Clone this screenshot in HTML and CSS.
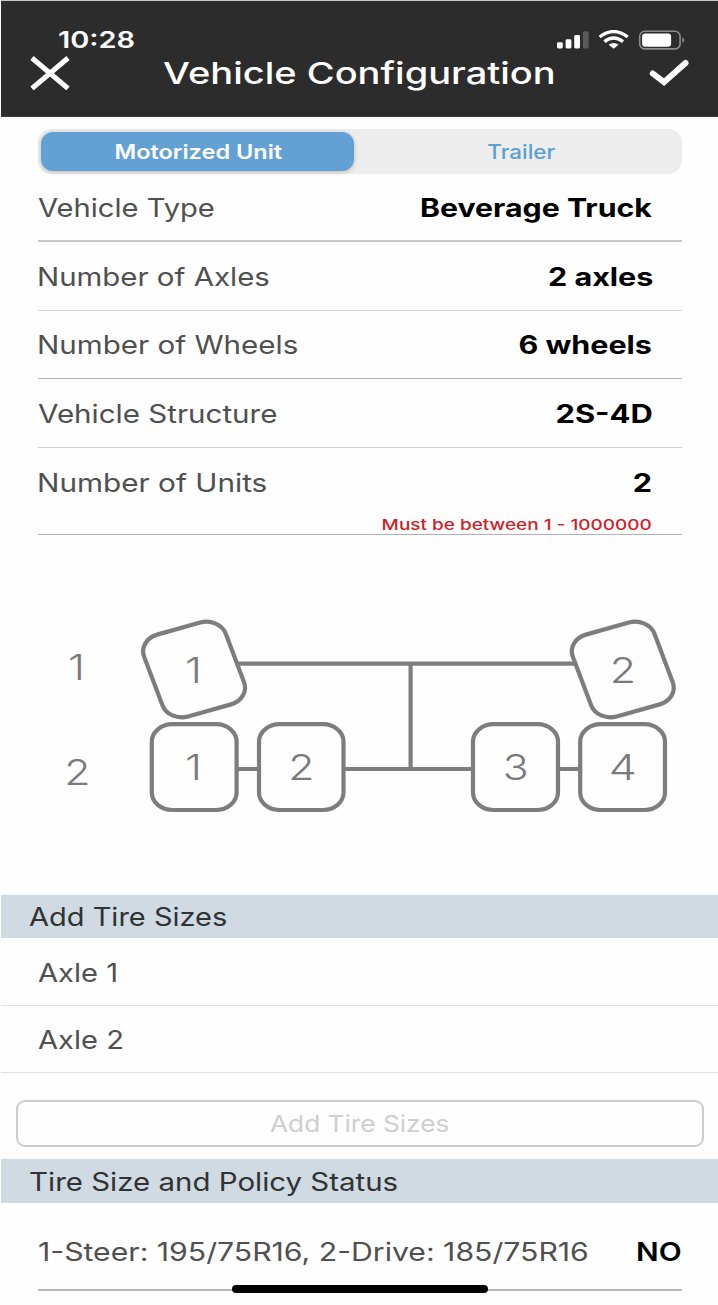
FILE: index.html
```html
<!DOCTYPE html>
<html lang="en">
<head>
<meta charset="utf-8">
<title>Vehicle Configuration</title>
<link rel="stylesheet" href="styles.css">
</head>
<body>
<div class="screen">
  <header class="header">
    <div class="status">
      <span class="time">10:28</span>
      <svg class="status-icons" width="129" height="20" viewBox="0 0 129 20">
        <g fill="#fff">
          <rect x="0" y="12.300" width="5.800" height="6.200" rx="1.400"/>
          <rect x="8.600" y="9.300" width="5.800" height="9.200" rx="1.400"/>
          <rect x="17.200" y="5" width="5.800" height="13.500" rx="1.400"/>
          <rect x="25.900" y="1.200" width="5.800" height="17.300" rx="1.400" fill="#5a5a5a"/>
        </g>
        <g fill="none" stroke="#fff" stroke-width="3.400">
          <path d="M42.700 7Q56.500 -3.800 70.700 7"/>
          <path d="M47.400 11.600Q56.600 4.200 66 11.600"/>
        </g>
        <path d="M51.600 14.800Q56.600 11 61.600 14.800L56.600 18.800Z" fill="#fff"/>
        <rect x="82.700" y="1.300" width="40.400" height="17.600" rx="5" fill="none" stroke="#8c8c8c" stroke-width="1.600"/>
        <rect x="85.100" y="3.500" width="29" height="13.200" rx="3" fill="#fff"/>
        <path d="M125.300 7.200Q129.500 10.100 125.300 13Z" fill="#8c8c8c"/>
      </svg>
    </div>
    <div class="nav">
      <svg class="close" width="40" height="34" viewBox="0 0 40 34"><path d="M2 2L38 32.500M38 2L2 32.500" stroke="#fff" stroke-width="5"/></svg>
      <span class="title">Vehicle Configuration</span>
      <svg class="check" width="42" height="30" viewBox="0 0 42 30"><path d="M4.800 15.500L16 24.200L37.500 5" fill="none" stroke="#fff" stroke-width="6" stroke-linecap="round"/></svg>
    </div>
  </header>

  <div class="tabs">
    <div class="tab active"><span class="motorized">Motorized Unit</span></div>
    <div class="tab"><span class="trailer">Trailer</span></div>
  </div>

  <div class="fields">
    <div class="field strong"><span class="label type">Vehicle Type</span><b class="value truck">Beverage Truck</b></div>
    <div class="field"><span class="label stem axles">Number of Axles</span><b class="value two-axles">2 axles</b></div>
    <div class="field mid"><span class="label stem wheels">Number of Wheels</span><b class="value six-wheels">6 wheels</b></div>
    <div class="field"><span class="label structure">Vehicle Structure</span><b class="value code">2S-4D</b></div>
    <div class="field mid last">
      <span class="label stem units">Number of Units</span>
      <div class="entry"><b class="value count">2</b><span class="error">Must be between 1 - 1000000</span></div>
    </div>
  </div>

  <svg class="diagram" width="718" height="360" viewBox="0 535 718 360">
    <g fill="none" stroke="#7d7d7d" stroke-width="4.200">
      <path d="M230 663.700H590M410.600 663.700V769M238 769H258M344 769H472M558 769H580"/>
      <g fill="#fefefe">
        <rect x="151.800" y="724.200" width="84.800" height="85.800" rx="20.500" ry="17.500"/>
        <rect x="259" y="724.200" width="84.500" height="85.800" rx="20.500" ry="17.500"/>
        <rect x="473" y="724.200" width="85" height="85.800" rx="20.500" ry="17.500"/>
        <rect x="580.200" y="724.200" width="84.800" height="85.800" rx="20.500" ry="17.500"/>
        <rect x="-37" y="-43" width="74" height="86" rx="17.500" vector-effect="non-scaling-stroke" transform="translate(194.100 669.500) scale(1.160 1) rotate(-18)"/>
        <rect x="-37" y="-43" width="74" height="86" rx="17.500" vector-effect="non-scaling-stroke" transform="translate(622.800 669.500) scale(1.160 1) rotate(-18)"/>
      </g>
    </g>
    <g class="digits">
      <text transform="translate(76.500 680.300) scale(1.190 1)">1</text>
      <text transform="translate(77.300 785.300) scale(1.190 1)">2</text>
      <text transform="translate(193.500 682.800) scale(1.190 1)">1</text>
      <text transform="translate(622.800 682.800) scale(1.190 1)">2</text>
      <text transform="translate(193.500 780.300) scale(1.190 1)">1</text>
      <text transform="translate(301.300 780.300) scale(1.190 1)">2</text>
      <text transform="translate(515.800 780.300) scale(1.190 1)">3</text>
      <text transform="translate(622.800 780.300) scale(1.240 1)">4</text>
    </g>
  </svg>

  <h2 class="section"><span class="add">Add Tire Sizes</span></h2>
  <div class="axle"><span class="axle-one">Axle 1</span></div>
  <div class="axle"><span class="axle-two">Axle 2</span></div>
  <button class="add-button"><span class="button-text">Add Tire Sizes</span></button>
  <h2 class="section"><span class="policy">Tire Size and Policy Status</span></h2>
  <div class="policy-row"><span class="sizes">1-Steer: 195/75R16, 2-Drive: 185/75R16</span><b class="answer">NO</b></div>
  <div class="home"></div>
</div>
</body>
</html>
```
FILE: styles.css
```css
* { box-sizing: border-box; }
body { margin: 0; background: #fefefe; font-family: Inter, sans-serif; font-size: 25.3px; color: #505050; }
.screen { position: relative; width: 718px; height: 1305px; overflow: hidden; display: flex; flex-direction: column; }
.screen span, .screen b { display: block; white-space: nowrap; transform-origin: left center; }

.header { height: 117px; flex: none; margin-left: 1px; background: #2c2c2c; border-top: 1px solid #c5c9c8; border-bottom: 1px solid #3c3c3c; color: #fff; padding-top: 26px; }
.status { height: 24px; display: flex; justify-content: space-between; align-items: center; padding: 2px 32px 0 57px; }
.time { font-size: 23px; font-weight: 600; transform: scaleX(1.259); }
.nav { height: 44px; display: flex; justify-content: space-between; align-items: center; padding: 0 28px 0 29px; }
.title { font-size: 30px; font-weight: 500; width: 390px; margin-left: -3px; margin-top: -1px; transform: scaleX(1.268); }

.tabs { display: flex; flex: none; margin: 12px 36px 0 38px; height: 45px; padding: 3px; border-radius: 14px; background: #ededed; font-size: 20px; font-weight: 500; color: #5b9fd3; }
.tab { flex: 1; display: flex; justify-content: center; align-items: center; border-radius: 12px; padding-left: 10px; }
.tab.active { flex: 0 0 313px; padding-left: 1px; color: #fff; background: #63a1d4; box-shadow: 0 1px 4px rgba(0, 0, 0, .22); }
.screen .tab span { transform-origin: center; }
.motorized { font-weight: 600; transform: scaleX(1.176); }
.trailer { transform: scaleX(1.12); }

.fields { flex: none; margin: -1px 36px 0 38px; }
.field { height: 68.500px; padding: 1px 30px 0 0; display: flex; justify-content: space-between; align-items: center; border-bottom: 1px solid #d3d3d3; }
.field.strong { border-bottom: 2px solid #c8c8c8; height: 69px; }
.field.mid { border-bottom-color: #b0b0b0; }
.field.last { height: 87px; align-items: flex-start; padding-top: 19px; line-height: 31px; }
.entry { display: flex; flex-direction: column; align-items: flex-end; }
.type { transform: scaleX(1.151); }
.axles { transform: scaleX(1.163); }
.wheels { transform: scaleX(1.169); }
.structure { transform: scaleX(1.168); }
.units { transform: scaleX(1.175); }
.stem { margin-left: -1px; }
.screen .value { color: #000; font-weight: 700; transform-origin: right center; }
.truck { transform: scaleX(1.196); }
.screen .two-axles { margin-right: -1px; transform: scaleX(1.206); }
.six-wheels { transform: scaleX(1.204); }
.screen .code { margin-right: -1px; transform: scaleX(1.22); }
.count { transform: scaleX(1.21); }
.screen .error { margin-top: 18px; font-size: 15px; line-height: 18px; font-weight: 500; color: #cd2026; transform-origin: right center; transform: scaleX(1.264); }

.diagram { flex: none; display: block; }
.digits { font-size: 36px; font-weight: 350; fill: #7a7a7a; text-anchor: middle; }

.section { flex: none; margin: 0 0 0 1px; height: 43.500px; padding: 1px 0 0 28px; display: flex; align-items: center; font-size: 25.3px; font-weight: 400; color: #323232; background: #cfdae3; }
.add { transform: scaleX(1.146); }
.policy { transform: scaleX(1.164); }
.axle { flex: none; height: 67.500px; margin-left: 1px; padding: 2px 0 0 37px; display: flex; align-items: center; border-bottom: 1px solid #e0e0e0; }
.axle-one { transform: scaleX(1.15); }
.axle-two { transform: scaleX(1.15); }
.add-button { flex: none; height: 47px; margin: 27px 14px 12px 16px; padding: 0; display: flex; justify-content: center; align-items: center; border: 2px solid #ccc; border-radius: 9px; background: #fefefe; color: #cecece; font: 400 23px Inter, sans-serif; }
.screen .button-text { transform-origin: center; transform: scaleX(1.14); }
.policy-row { flex: none; height: 88px; margin: 0 36px 0 38px; padding-top: 12px; display: flex; justify-content: space-between; align-items: center; border-bottom: 2px solid #b9b9b9; }
.sizes { transform: scaleX(1.193); }
.screen .answer { color: #000; font-weight: 600; transform-origin: right center; transform: scaleX(1.18); }
.home { position: absolute; left: 232px; top: 1285px; width: 256px; height: 8px; border-radius: 4px; background: #000; }
```
